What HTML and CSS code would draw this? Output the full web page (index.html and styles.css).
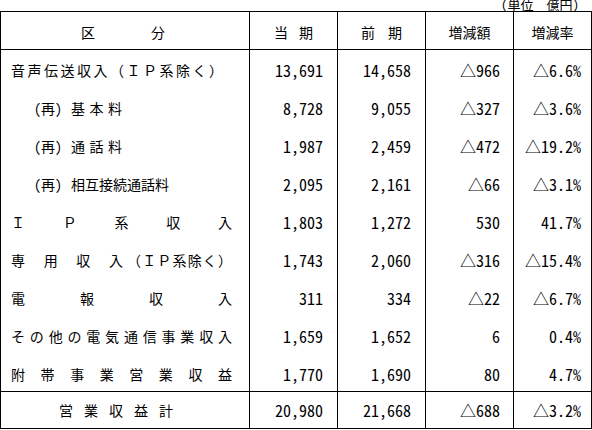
FILE: index.html
```html
<!DOCTYPE html>
<html lang="ja">
<head>
<meta charset="utf-8">
<title>営業収益</title>
<link rel="stylesheet" href="styles.css">
</head>
<body>
<div class="unit">(単位　億円)</div>
<table class="tbl">
  <colgroup>
    <col class="c-lbl"><col class="c-num"><col class="c-num"><col class="c-num"><col class="c-pct">
  </colgroup>
  <thead>
    <tr>
      <th class="h-lbl">区分</th>
      <th class="h-cur">当期</th>
      <th class="h-prev">前期</th>
      <th class="h-c">増減額</th>
      <th class="h-c">増減率</th>
    </tr>
  </thead>
  <tbody>
    <tr>
      <td class="lbl jst r-first">音声伝送収入（ＩＰ系除く）</td>
      <td class="num">13,691</td><td class="num">14,658</td><td class="num n4">△966</td><td class="num n5">△6.6%</td>
    </tr>
    <tr>
      <td class="lbl sub"><span class="re">(再)</span><span class="sx">基本料</span></td>
      <td class="num">8,728</td><td class="num">9,055</td><td class="num n4">△327</td><td class="num n5">△3.6%</td>
    </tr>
    <tr>
      <td class="lbl sub"><span class="re">(再)</span><span class="sx">通話料</span></td>
      <td class="num">1,987</td><td class="num">2,459</td><td class="num n4">△472</td><td class="num n5">△19.2%</td>
    </tr>
    <tr>
      <td class="lbl sub"><span class="re">(再)</span><span>相互接続通話料</span></td>
      <td class="num">2,095</td><td class="num">2,161</td><td class="num n4">△66</td><td class="num n5">△3.1%</td>
    </tr>
    <tr>
      <td class="lbl jst">ＩＰ系収入</td>
      <td class="num">1,803</td><td class="num">1,272</td><td class="num n4">530</td><td class="num n5">41.7%</td>
    </tr>
    <tr>
      <td class="lbl"><div class="split"><span class="sp-a">専用収入</span><span class="sp-b">（ＩＰ系除く）</span></div></td>
      <td class="num">1,743</td><td class="num">2,060</td><td class="num n4">△316</td><td class="num n5">△15.4%</td>
    </tr>
    <tr>
      <td class="lbl jst">電報収入</td>
      <td class="num">311</td><td class="num">334</td><td class="num n4">△22</td><td class="num n5">△6.7%</td>
    </tr>
    <tr>
      <td class="lbl jst">その他の電気通信事業収入</td>
      <td class="num">1,659</td><td class="num">1,652</td><td class="num n4">6</td><td class="num n5">0.4%</td>
    </tr>
    <tr>
      <td class="lbl jst">附帯事業営業収益</td>
      <td class="num">1,770</td><td class="num">1,690</td><td class="num n4">80</td><td class="num n5">4.7%</td>
    </tr>
  </tbody>
  <tfoot>
    <tr>
      <td class="lbl total">営業収益計</td>
      <td class="num">20,980</td><td class="num">21,668</td><td class="num n4">△688</td><td class="num n5">△3.2%</td>
    </tr>
  </tfoot>
</table>
</body>
</html>
```

FILE: styles.css
```css
html, body {
  margin: 0;
  padding: 0;
  background: #ffffff;
}

body {
  font-family: "Noto Sans Mono CJK JP", "Noto Sans CJK JP", sans-serif;
  color: #000000;
  width: 592px;
}

.unit {
  height: 11px;
  overflow: hidden;
  display: flex;
  justify-content: flex-end;
  align-items: flex-end;
  padding-right: 13px;
  font-size: 13px;
  line-height: 12px;
}

.tbl {
  border-collapse: collapse;
  table-layout: fixed;
  width: 591px;
  border: 1px solid #000;
}

.c-lbl { width: 249px; }
.c-num { width: 88px; }
.c-pct { width: 78px; }

.tbl th,
.tbl td {
  border-left: 1px solid #000;
  border-right: 1px solid #000;
  padding: 0;
  vertical-align: middle;
  white-space: nowrap;
}

.tbl thead tr { height: 38px; }
.tbl tbody tr { height: 38px; }
.tbl tfoot tr { height: 37px; }

.tbl thead th {
  border-bottom: 1px solid #000;
  font-weight: normal;
  font-size: 14px;
  padding-top: 2px;
}

.h-lbl {
  text-align: left;
  padding-left: 80px !important;
  letter-spacing: 56px;
}

.h-cur {
  text-align: left;
  padding-left: 24px !important;
  letter-spacing: 11px;
}

.h-prev {
  text-align: left;
  padding-left: 23px !important;
  letter-spacing: 13px;
}

.h-c {
  text-align: center;
}

.tbl tfoot td {
  border-top: 1px solid #000;
}

.lbl {
  font-size: 14px;
  padding-top: 3px !important;
  padding-left: 10px !important;
  padding-right: 17px !important;
  text-align: left;
}

.jst {
  text-align: justify;
  text-align-last: justify;
  text-justify: inter-character;
}

.r-first {
  padding-right: 26px !important;
}

.sub {
  padding-left: 33px !important;
}

.re {
  display: inline-block;
  width: 37px;
}

.sx {
  letter-spacing: 4.5px;
}

.split {
  display: flex;
}

.sp-a {
  width: 112px;
  text-align: justify;
  text-align-last: justify;
  text-justify: inter-character;
  padding-right: 4px;
}

.sp-b {
  flex: 1;
  text-align: justify;
  text-align-last: justify;
  text-justify: inter-character;
}

.total {
  text-align: left;
  padding-left: 58px !important;
  letter-spacing: 11px;
  padding-top: 0 !important;
}

.num {
  font-size: 16px;
  text-align: right;
  padding-right: 14px !important;
  padding-top: 3px !important;
}

.n4 { padding-right: 13px !important; }
.n5 { padding-right: 10px !important; }

.tbl tfoot .num { padding-top: 0 !important; }
```
